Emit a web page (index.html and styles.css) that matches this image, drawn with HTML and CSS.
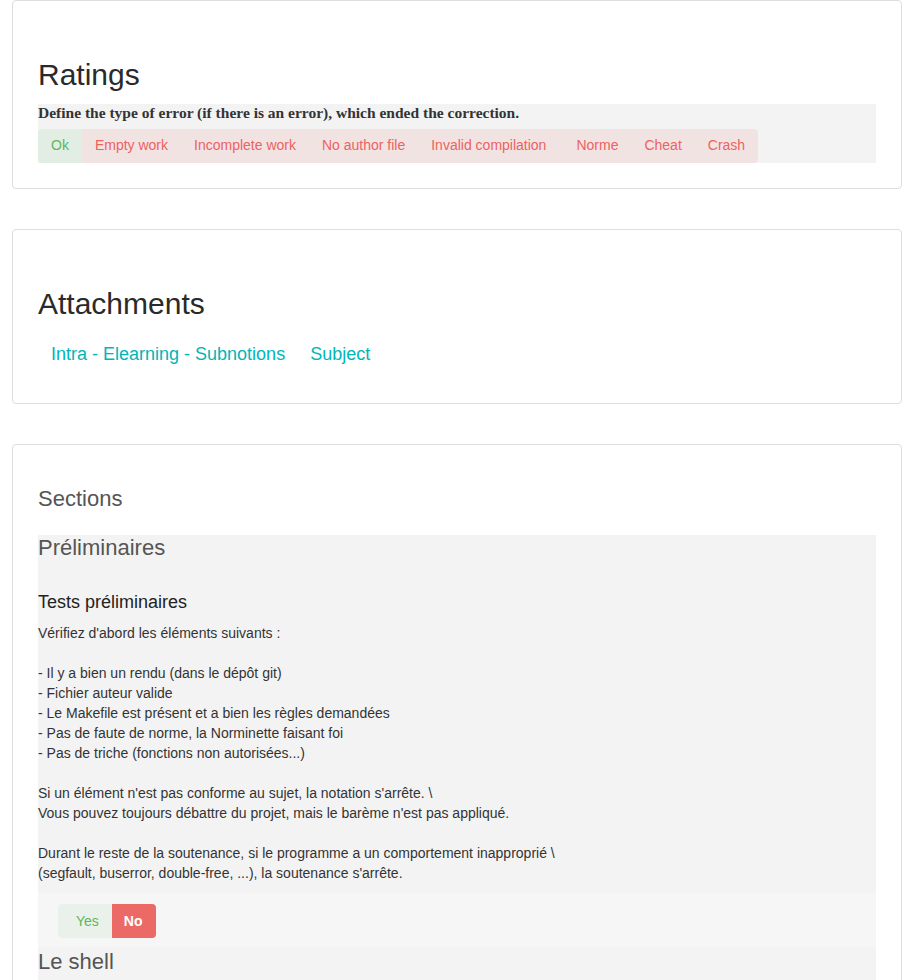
FILE: index.html
```html
<!DOCTYPE html>
<html lang="fr">
<head>
<meta charset="utf-8">
<title>Scale</title>
<link rel="stylesheet" href="styles.css">
</head>
<body>
<div class="page">
  <section class="card">
    <h2 class="card-title">Ratings</h2>
    <div class="rating-box">
      <div class="rating-label">Define the type of error (if there is an error), which ended the correction.</div>
      <div class="btn-group">
        <span class="btn btn-ok">Ok</span>
        <span class="btn btn-err">Empty work</span>
        <span class="btn btn-err">Incomplete work</span>
        <span class="btn btn-err">No author file</span>
        <span class="btn btn-err btn-wide">Invalid compilation</span>
        <span class="btn btn-err">Norme</span>
        <span class="btn btn-err">Cheat</span>
        <span class="btn btn-err btn-last">Crash</span>
      </div>
    </div>
  </section>

  <section class="card">
    <h2 class="card-title">Attachments</h2>
    <div class="links">
      <a class="link" href="#">Intra - Elearning - Subnotions</a>
      <a class="link" href="#">Subject</a>
    </div>
  </section>

  <section class="card card-sections">
    <h3 class="sections-title">Sections</h3>
    <div class="section-box">
      <h3 class="section-name">Préliminaires</h3>
      <h4 class="question-title">Tests préliminaires</h4>
      <p class="question-text">Vérifiez d'abord les éléments suivants :<br><br>- Il y a bien un rendu (dans le dépôt git)<br>- Fichier auteur valide<br>- Le Makefile est présent et a bien les règles demandées<br>- Pas de faute de norme, la Norminette faisant foi<br>- Pas de triche (fonctions non autorisées...)<br><br>Si un élément n'est pas conforme au sujet, la notation s'arrête. \<br>Vous pouvez toujours débattre du projet, mais le barème n'est pas appliqué.<br><br>Durant le reste de la soutenance, si le programme a un comportement inapproprié \<br>(segfault, buserror, double-free, ...), la soutenance s'arrête.</p>
      <div class="answer-box">
        <div class="yn-group">
          <span class="yn yn-yes">Yes</span>
          <span class="yn yn-no">No</span>
        </div>
      </div>
      <h3 class="section-name section-next">Le shell</h3>
    </div>
  </section>
</div>
</body>
</html>
```

FILE: styles.css
```css
* { box-sizing: border-box; }

html, body {
  margin: 0;
  padding: 0;
  background: #ffffff;
}

body {
  font-family: "Liberation Sans", Arial, Helvetica, sans-serif;
  font-size: 14px;
  line-height: 20px;
  color: #333333;
}

.page {
  padding: 0 19px 0 12px;
}

.card {
  border: 1px solid #dddddd;
  border-radius: 4px;
  padding: 25px;
  margin-bottom: 40px;
  background: #ffffff;
}

.card-title {
  margin: 32px 0 13px;
  font-size: 30px;
  line-height: 33px;
  font-weight: normal;
  color: #2a2a2a;
}

.rating-box {
  background: #f3f3f3;
}

.rating-label {
  font-family: "Liberation Serif", "Times New Roman", serif;
  font-weight: bold;
  font-size: 15.5px;
  line-height: 18px;
  color: #333333;
  margin-bottom: 7px;
}

.btn-group {
  display: inline-flex;
  border-radius: 4px;
  overflow: hidden;
  vertical-align: top;
}

.btn {
  display: block;
  padding: 6px 13px 8px;
  font-size: 14px;
  line-height: 20px;
}

.btn-ok {
  background: #e2ede4;
  color: #5cb85c;
}

.btn-err {
  background: #f2e3e3;
  color: #ec625f;
}

.btn-wide {
  padding-right: 17px;
}

.links {
  display: flex;
  margin-top: 16px;
  padding-bottom: 6px;
}

.link {
  display: block;
  padding: 6px 12px 6px 13px;
  font-size: 18px;
  line-height: 24px;
  color: #00b6b8;
  text-decoration: none;
}

.sections-title {
  margin: 15px 0 23px;
  font-size: 22px;
  line-height: 27px;
  font-weight: normal;
  color: #555555;
}

.section-box {
  background: #f3f3f3;
  padding-bottom: 30px;
}

.section-name {
  margin: 0;
  font-size: 22px;
  line-height: 26px;
  font-weight: normal;
  color: #555555;
}

.question-title {
  margin: 31px 0 11px;
  font-size: 18px;
  line-height: 20px;
  font-weight: normal;
  color: #222222;
}

.question-text {
  margin: 0 0 10px;
  font-size: 14px;
  line-height: 20px;
  color: #333333;
}

.answer-box {
  background: #f6f6f6;
  padding: 11px 20px 9px;
}

.yn-group {
  display: inline-flex;
  border-radius: 4px;
  overflow: hidden;
  vertical-align: top;
}

.yn {
  display: block;
  padding: 7px 12px;
  font-size: 14px;
  line-height: 20px;
}

.yn-yes {
  background: #eaf0ea;
  color: #5cb85c;
  padding-left: 18px;
  padding-right: 13px;
}

.yn-no {
  background: #ec6a65;
  color: #ffffff;
  font-weight: bold;
  padding-left: 12px;
  padding-right: 13px;
}

.section-next {
  margin-top: 2px;
}
```
